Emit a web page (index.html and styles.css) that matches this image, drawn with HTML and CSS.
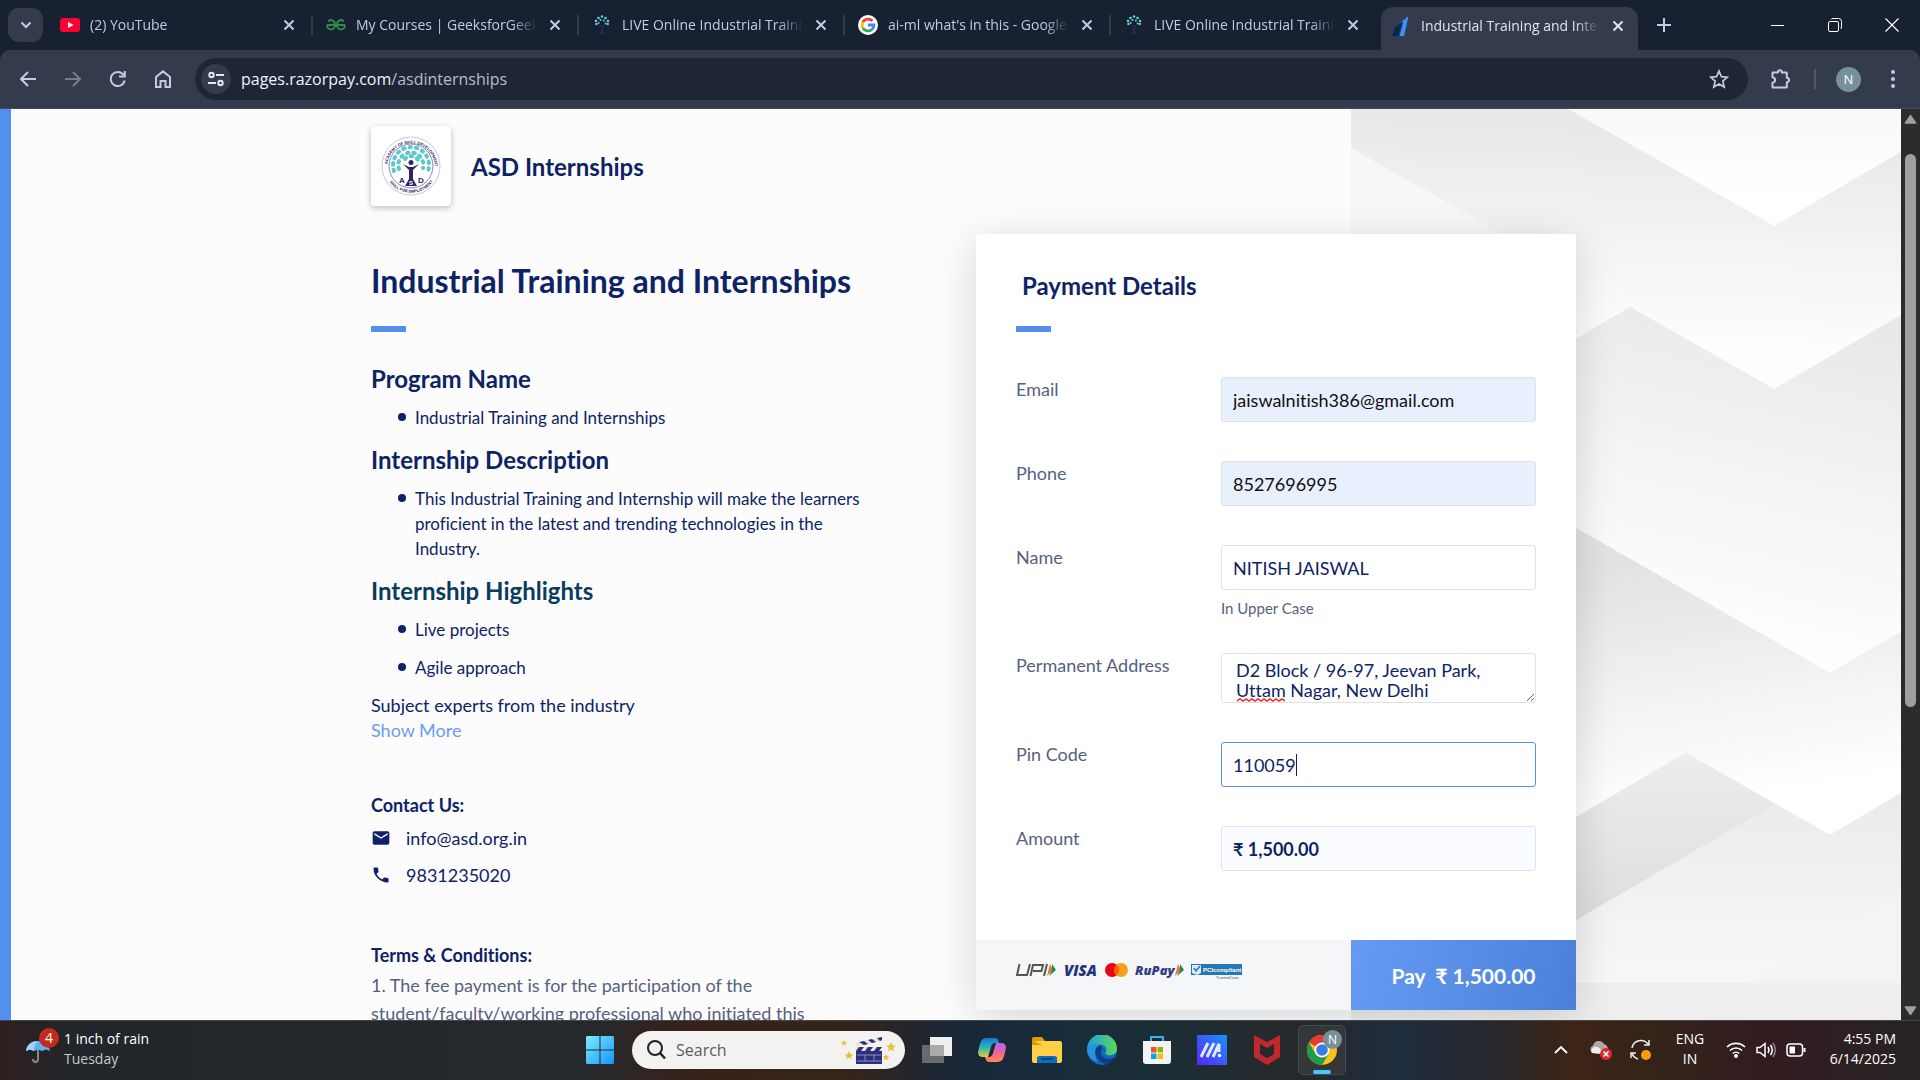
FILE: index.html
```html
<!DOCTYPE html>
<html lang="en">
<head>
<meta charset="utf-8">
<title>Industrial Training and Internships</title>
<link rel="stylesheet" href="styles.css">
</head>
<body>
<svg class="defs" width="0" height="0" aria-hidden="true">
  <symbol id="x" viewBox="0 0 12 12"><path d="M1.5 1.5l9 9M10.5 1.5l-9 9" stroke="currentColor" stroke-width="2" fill="none"/></symbol>
  <symbol id="tree" viewBox="0 0 20 20">
    <g fill="#5fd0d4"><circle cx="10" cy="1.5" r="1.3"/><circle cx="6.5" cy="3" r="1.3"/><circle cx="13.5" cy="3" r="1.3"/><circle cx="4" cy="6" r="1.3"/><circle cx="16" cy="6" r="1.3"/><circle cx="4.400" cy="9" r="1.2"/><circle cx="15.800" cy="9" r="1.2"/><circle cx="8.5" cy="5" r="1"/><circle cx="11.8" cy="5.6" r="1"/><circle cx="6.6" cy="8" r="1"/><circle cx="13.6" cy="8.4" r="1"/></g>
    <path d="M7 9.500l2.400 2.500v4l-2.400 3h6l-2-3v-4l2-2.500-3 1.500z" fill="#2b2468"/>
  </symbol>
</svg>

<header class="browser">
  <div class="tabstrip">
    <button class="tab-search" aria-label="Search tabs"><svg width="12" height="8" viewBox="0 0 12 8"><path d="M1.500 1.500L6 6l4.500-4.500" fill="none" stroke="currentColor" stroke-width="2"/></svg></button>
    <div class="tab">
      <svg class="fav" viewBox="0 0 20 20"><rect y="3" width="20" height="14" rx="3" fill="#ff0033"/><path d="M8 7l5.500 3L8 13z" fill="#fff"/></svg>
      <span class="tab-title">(2) YouTube</span><button class="tab-close" aria-label="Close tab"><svg><use href="#x"/></svg></button>
    </div>
    <div class="tab">
      <svg class="fav" viewBox="0 0 20 20"><path d="M1 10h18M1 10c0 6 8 6 8 0 0-5-5-6-7-3.500M19 10c0 6-8 6-8 0 0-5 5-6 7-3.500" fill="none" stroke="#2f8d46" stroke-width="2"/></svg>
      <span class="tab-title">My Courses | GeeksforGeeks</span><button class="tab-close" aria-label="Close tab"><svg><use href="#x"/></svg></button>
    </div>
    <div class="tab">
      <svg class="fav"><use href="#tree"/></svg>
      <span class="tab-title">LIVE Online Industrial Training</span><button class="tab-close" aria-label="Close tab"><svg><use href="#x"/></svg></button>
    </div>
    <div class="tab">
      <svg class="fav" viewBox="0 0 20 20"><circle cx="10" cy="10" r="10" fill="#fff"/><g fill="none" stroke-width="2.800"><path d="M14.500 6A6 6 0 0 0 4.800 7.200" stroke="#ea4335"/><path d="M4.800 7.200a6 6 0 0 0 0 5.600" stroke="#fbbc04"/><path d="M4.800 12.800a6 6 0 0 0 9 1.800" stroke="#34a853"/><path d="M13.800 14.600A6 6 0 0 0 16 10h-6" stroke="#4285f4"/></g></svg>
      <span class="tab-title">ai-ml what's in this - Google Search</span><button class="tab-close" aria-label="Close tab"><svg><use href="#x"/></svg></button>
    </div>
    <div class="tab last">
      <svg class="fav"><use href="#tree"/></svg>
      <span class="tab-title">LIVE Online Industrial Training</span><button class="tab-close" aria-label="Close tab"><svg><use href="#x"/></svg></button>
    </div>
    <div class="tab active">
      <svg class="fav" viewBox="0 0 20 20"><path d="M5 10.500L17.500 0 13 20H8.500l4-14.500-8 5.500z" fill="#3395ff"/><path d="M4 11l7-5-3.500 14H1z" fill="#072654"/></svg>
      <span class="tab-title">Industrial Training and Internships</span><button class="tab-close" aria-label="Close tab"><svg><use href="#x"/></svg></button>
    </div>
    <button class="new-tab" aria-label="New tab"><svg width="14" height="14" viewBox="0 0 14 14"><path d="M7 0v14M0 7h14" stroke="currentColor" stroke-width="2"/></svg></button>
    <div class="win-controls">
      <button aria-label="Minimize"><svg width="13" height="13" viewBox="0 0 13 13"><path d="M0 6.500h13" stroke="#fff"/></svg></button>
      <button aria-label="Restore"><svg width="14" height="14" viewBox="0 0 14 14" fill="none" stroke="#fff"><rect x=".5" y="3.500" width="10" height="10" rx="1.500"/><path d="M3 1.500q.5-1 2-1h5.500q3 0 3 3V9q0 1.500-1 2"/></svg></button>
      <button aria-label="Close"><svg width="14" height="14" viewBox="0 0 14 14"><path d="M.5.500l13 13M13.500.500l-13 13" stroke="#fff" stroke-width="1.200"/></svg></button>
    </div>
  </div>
  <nav class="toolbar">
    <button aria-label="Back"><svg width="16" height="16" viewBox="0 0 16 16"><path d="M16 8H1.500M8 1L1 8l7 7" fill="none" stroke="currentColor" stroke-width="2"/></svg></button>
    <button class="dim" aria-label="Forward"><svg width="16" height="16" viewBox="0 0 16 16"><path d="M0 8h14.500M8 1l7 7-7 7" fill="none" stroke="currentColor" stroke-width="2"/></svg></button>
    <button aria-label="Reload"><svg width="16" height="16" viewBox="0 0 16 16"><path d="M14.600 9.500A7 7 0 1 1 13.500 4M14.800 0v5.500H9" fill="none" stroke="currentColor" stroke-width="2"/></svg></button>
    <button aria-label="Home"><svg width="16" height="18" viewBox="0 0 16 18"><path d="M1 17V7l7-5.600L15 7v10h-4.500v-6h-5v6z" fill="none" stroke="currentColor" stroke-width="2"/></svg></button>
    <div class="omnibox">
      <button class="site-info" aria-label="Site information"><svg width="16" height="16" viewBox="0 0 16 16" fill="none" stroke="currentColor" stroke-width="2"><circle cx="3.500" cy="4" r="2.200"/><path d="M8 4h8M0 12h8"/><circle cx="12.500" cy="12" r="2.200"/></svg></button>
      <div class="url"><span>pages.razorpay.com</span>/asdinternships</div>
      <button class="star" aria-label="Bookmark"><svg width="20" height="20" viewBox="0 0 20 20"><path d="M10 2l2.400 5.600 6 .500-4.600 4 1.400 5.900L10 14.900 4.800 18l1.400-5.900-4.600-4 6-.5z" fill="none" stroke="currentColor" stroke-width="1.700"/></svg></button>
    </div>
    <button class="ext" aria-label="Extensions"><svg width="22" height="22" viewBox="0 0 22 22"><path d="M2.500 4.500h5.300c0-3 4-3 4 0h5v5.200c3 .3 3 4.300 0 4.600v5.200H2.500v-4.800c3.400-.4 3.400-5 0-5.400z" fill="none" stroke="currentColor" stroke-width="2" stroke-linejoin="round"/></svg></button>
    <span class="tool-sep"></span>
    <button class="profile" aria-label="Profile">N</button>
    <button class="menu" aria-label="Menu"><svg width="4" height="18" viewBox="0 0 4 18" fill="currentColor"><circle cx="2" cy="2" r="2"/><circle cx="2" cy="9" r="2"/><circle cx="2" cy="16" r="2"/></svg></button>
  </nav>
</header>

<div class="viewport">
<main class="page">
  <svg class="pattern" viewBox="0 0 550 911" preserveAspectRatio="none" aria-hidden="true">
    <defs>
      <linearGradient id="g0" x1="0" y1="0" x2="0" y2="1"><stop offset="0" stop-color="#f9f9f9"/><stop offset=".8" stop-color="#fff"/></linearGradient>
      <linearGradient id="g1" gradientUnits="userSpaceOnUse" x1="240" y1="10" x2="230" y2="230"><stop offset="0" stop-color="#e8e8e8"/><stop offset="1" stop-color="#fdfdfd"/></linearGradient>
      <linearGradient id="g4" gradientUnits="userSpaceOnUse" x1="0" y1="640" x2="0" y2="874"><stop offset="0" stop-color="#ededed"/><stop offset="1" stop-color="#d8d8d8"/></linearGradient>
      <linearGradient id="g5" gradientUnits="userSpaceOnUse" x1="0" y1="690" x2="0" y2="874"><stop offset="0" stop-color="#ebebeb"/><stop offset="1" stop-color="#f7f7f7"/></linearGradient>
      <linearGradient id="g8" gradientUnits="userSpaceOnUse" x1="450" y1="210" x2="380" y2="530"><stop offset="0" stop-color="#e9e9e9"/><stop offset="1" stop-color="#fefefe"/></linearGradient>
      <linearGradient id="g9" gradientUnits="userSpaceOnUse" x1="350" y1="440" x2="390" y2="690"><stop offset="0" stop-color="#e2e2e2"/><stop offset="1" stop-color="#fff"/></linearGradient>
    </defs>
    <path d="M0 0h550v911H0z" fill="#eee"/>
    <path d="M217 0l206 117L550 43V0z" fill="url(#g0)"/>
    <path d="M0 0h217l206 117L550 43v163l-127 74-144-82-54 32H0z" fill="url(#g1)"/>
    <path d="M0 39l152 86v100H0z" fill="#f7f7f7"/>
    <path d="M225 230l54-32 144 82 127-74v317l-71 41-254-145z" fill="url(#g8)"/>
    <path d="M225 419l254 145 71-41v161l-71 42-144-82-110 64z" fill="url(#g9)"/>
    <path d="M225 874V708l110-64 144 82 71-42v190z" fill="url(#g5)"/>
    <path d="M225 811V708l110-64 89 51z" fill="url(#g4)"/>
    <path d="M396 874l154-90v90z" fill="#f4f4f4"/>
  </svg>
  <div class="content">
    <div class="brand">
      <div class="brand-logo">
        <svg width="60" height="60" viewBox="0 0 60 60" role="img" aria-label="Academy of Skill Development">
          <defs><path id="arcT" d="M8 41A24 24 0 1 1 52 41"/><path id="arcB" d="M5 40A27 27 0 0 0 55 40"/></defs>
          <circle cx="30" cy="30" r="29" fill="#fff" stroke="#c9c6d8"/><circle cx="30" cy="30" r="22" fill="none" stroke="#8d87ab"/>
          <g font-family="Liberation Sans, sans-serif" font-weight="700" fill="#2b2468" font-size="4"><text><textPath href="#arcT" startOffset="13">ACADEMY OF SKILL DEVELOPMENT</textPath></text><text><textPath href="#arcB" startOffset="7">SKILL FOR EMPLOYMENT</textPath></text></g>
          <g fill="none" stroke="#5cc9cd" stroke-width="4" stroke-linecap="round" stroke-dasharray="1.500 5"><path d="M13 35A18 18 0 1 1 47 35"/><path d="M18 33A12.500 12.500 0 1 1 42 32"/><path d="M24 23a8 8 0 0 1 13 1"/></g>
          <path d="M22 28l6 6v9l-4 7h12l-4-7v-9l6-6-6 3h-4z" fill="#2b2468"/><circle cx="30" cy="26.500" r="2.500" fill="#2b2468"/>
          <g font-family="Liberation Sans, sans-serif" font-weight="700" font-size="8" fill="#2b2468"><text x="18" y="47">A</text><text x="37" y="47">D</text><text x="28" y="49" font-size="6" fill="#fff">S</text></g>
        </svg>
      </div>
      <span class="brand-name">ASD Internships</span>
    </div>
    <div class="columns">
      <section class="details">
        <h1>Industrial Training and Internships</h1>
        <div class="rule"></div>
        <div class="description">
          <h2>Program Name</h2>
          <ul><li>Industrial Training and Internships</li></ul>
          <h2>Internship Description</h2>
          <ul><li>This Industrial Training and Internship will make the learners<br>proficient in the latest and trending technologies in the<br>Industry.</li></ul>
          <h2 class="teal">Internship Highlights</h2>
          <ul><li>Live projects</li><li>Agile approach</li></ul>
          <p>Subject experts from the industry</p>
          <a href="#more">Show More</a>
        </div>
        <div class="contact">
          <h3>Contact Us:</h3>
          <div class="contact-row"><svg width="20" height="20" viewBox="0 0 24 24"><path d="M20 4H4a2 2 0 0 0-2 2v12a2 2 0 0 0 2 2h16a2 2 0 0 0 2-2V6a2 2 0 0 0-2-2zm0 4l-8 5-8-5V6l8 5 8-5z" fill="#0d2366"/></svg>info@asd.org.in</div>
          <div class="contact-row"><svg width="20" height="20" viewBox="0 0 24 24"><path d="M6.620 10.790a15.150 15.150 0 0 0 6.590 6.590l2.200-2.200a1 1 0 0 1 1.010-.240 11.400 11.400 0 0 0 3.580.570 1 1 0 0 1 1 1V20a1 1 0 0 1-1 1A17 17 0 0 1 3 4a1 1 0 0 1 1-1h3.500a1 1 0 0 1 1 1c0 1.250.2 2.450.57 3.570a1 1 0 0 1-.250 1.020z" fill="#0d2366"/></svg>9831235020</div>
        </div>
        <div class="terms">
          <h3>Terms &amp; Conditions:</h3>
          <p>1. The fee payment is for the participation of the<br>student/faculty/working professional who initiated this</p>
        </div>
      </section>
      <form class="card">
        <div class="card-body">
          <h2>Payment Details</h2>
          <div class="rule"></div>
          <div class="fields">
            <label for="email">Email</label><input class="filled" id="email" type="email" value="jaiswalnitish386@gmail.com">
            <label for="phone">Phone</label><input class="filled" id="phone" type="tel" value="8527696995">
            <label for="name">Name</label><div><input id="name" type="text" value="NITISH JAISWAL"><small>In Upper Case</small></div>
            <label for="address">Permanent Address</label>
            <div class="field-wrap"><textarea id="address" spellcheck="false">D2 Block / 96-97, Jeevan Park,
Uttam Nagar, New Delhi</textarea><svg class="squiggle" width="50" height="4" viewBox="0 0 50 4"><path d="M0 3l3-2 3 2 3-2 3 2 3-2 3 2 3-2 3 2 3-2 3 2 3-2 3 2 3-2 3 2 3-2 3 2" fill="none" stroke="#f22" stroke-width="1.500"/></svg></div>
            <label for="pin">Pin Code</label><div class="field-wrap"><input class="focused" id="pin" type="text" value="110059"><span class="caret"></span></div>
            <label for="amount">Amount</label><input class="amount" id="amount" type="text" value="₹ 1,500.00" readonly>
          </div>
        </div>
        <div class="card-foot">
          <svg class="methods" width="226" height="20" viewBox="0 0 226 20" role="img" aria-label="UPI, Visa, Mastercard, RuPay, PCI compliant">
            <g fill="none" stroke="#555" stroke-width="2"><path d="M3.500 4L1 15h10l3-11M14.500 16L17 5h10l-1.500 6H17M31 4l-3 12"/></g>
            <path d="M34 4l3 6-6 6z" fill="#e8772e"/><path d="M36 4l4 6-7 6 3-6z" fill="#1f8a4c"/>
            <g font-family="Open Sans, sans-serif" font-weight="800" font-style="italic"><text x="48" y="16" font-size="15" fill="#26337a">VISA</text><text x="119" y="15" font-size="13" fill="#353b87">RuPay</text></g>
            <circle cx="96" cy="10" r="7" fill="#eb001b"/><circle cx="105" cy="10" r="7" fill="#f79e1b"/><path d="M100.500 4.600a7 7 0 0 1 0 10.800 7 7 0 0 1 0-10.800z" fill="#ff5f00"/>
            <path d="M162 4l3 6-6 6z" fill="#e8772e"/><path d="M164 4l4 6-7 6 3-6z" fill="#1f8a4c"/>
            <path d="M175 4h51v11h-51z" fill="#2477b3"/><path d="M176 5h9v8l-4 2-5-2z" fill="#d9ecf7"/><path d="M178 8l2 3 4-5" fill="none" stroke="#2477b3" stroke-width="1.500"/>
            <g font-family="Liberation Sans, sans-serif"><text x="187" y="12" font-size="6" font-weight="700" fill="#fff">PCIcompliant</text><text x="200" y="19" font-size="4" fill="#456">TrustedCase</text></g>
          </svg>
          <button class="pay" type="button">Pay&nbsp; ₹ 1,500.00</button>
        </div>
      </form>
    </div>
  </div>
</main>
<div class="scrollbar" aria-hidden="true">
  <svg width="13" height="11" viewBox="0 0 11 9"><path d="M5.500 1L10 7.500H1z" fill="#a0a0a0" stroke="#a0a0a0" stroke-linejoin="round"/></svg>
  <div class="track"><div class="thumb"></div></div>
  <svg width="13" height="11" viewBox="0 0 11 9"><path d="M5.500 8L10 1.500H1z" fill="#a0a0a0" stroke="#a0a0a0" stroke-linejoin="round"/></svg>
</div>
</div>

<footer class="taskbar">
  <div class="widgets">
    <div class="weather"><svg width="26" height="28" viewBox="0 0 26 28"><path d="M13 13v10c0 4-5 4-5 0" fill="none" stroke="#888" stroke-width="2"/><path d="M1 15C2 8 7 5 13 5s11 3 12 10l-4-1.500-4 1.500-4-1.500L9 15l-4-1.500z" fill="#5fb0f2"/><path d="M1 15C2 8 7 5 13 5q-4 3-4 10l-4-1.500z" fill="#9dd2fb"/></svg><span class="badge">4</span></div>
    <div class="weather-text"><span>1 inch of rain</span><span class="muted">Tuesday</span></div>
  </div>
  <div class="dock">
    <button class="start" aria-label="Start"><svg width="28" height="28" viewBox="0 0 28 28"><defs><linearGradient id="win" x1="0" y1="0" x2="1" y2="1"><stop offset="0" stop-color="#7ceeff"/><stop offset="1" stop-color="#1594fa"/></linearGradient></defs><path d="M1 0h12.500v13.500H0V1zM14.500 0H27l1 1v12.500H14.500zM0 14.500h13.500V28H1l-1-1zM14.500 14.500H28V27l-1 1H14.500z" fill="url(#win)"/></svg></button>
    <label class="search">
      <svg width="22" height="22" viewBox="0 0 22 22"><circle cx="10" cy="9" r="7" fill="none" stroke="#222" stroke-width="2"/><path d="M15 14l5 5.500" stroke="#222" stroke-width="2.500"/></svg>
      <input type="text" placeholder="Search" aria-label="Search">
      <svg width="56" height="28" viewBox="0 0 56 28"><g fill="#eebc3d"><path d="M8 15l1.300 3 3 .2-2.300 2 .8 3L8 21.500 5.200 23.200l.8-3-2.300-2 3-.2z"/><path d="M3 4l1 2 2 .2-1.600 1.300.5 2L3 8.500 1 9.500l.6-2L0 6.200 2 6zM50 6l1.500 3.200 3.500.3-2.700 2.300.8 3.400L50 13.400l-3 1.800.8-3.400L45 9.500l3.500-.3zM45 18l1 2.200 2.300.2-1.700 1.600.5 2.300-2.100-1.200-2.100 1.200.5-2.300-1.700-1.600 2.300-.2z"/></g><path d="M15 12h26v16H15z" fill="#2c2f7c"/><path d="M14 7L40 1v4L15 11zM15 11h26v4H15z" fill="#efe3da"/><path d="M18 6l5 3 4-1-4-3zM27 4l4 3 4-1-4-3zM36 2l3 3 2-1V1zM18 11l-3 4h5l3-4zM27 11l-3 4h5l3-4zM36 11l-3 4h5l3-4z" fill="#2c2f7c"/><path d="M16 19h24M16 25h24M24 19v6M33 19v6" stroke="#8b90cf"/></svg>
    </label>
    <div class="apps">
      <button aria-label="Task view"><svg width="30" height="30" viewBox="0 0 30 30"><path d="M8 2h22v19H8z" fill="#eee"/><path d="M0 10h22v18H0z" fill="#777" fill-opacity=".85"/><path d="M8 10h14v11H8z" fill="#aaa"/></svg></button>
      <button aria-label="Copilot"><svg width="30" height="28" viewBox="0 0 30 28"><defs><linearGradient id="cpa" x1="0" y1="0" x2="0" y2="1"><stop offset="0" stop-color="#1577d8"/><stop offset=".5" stop-color="#2bb6b0"/><stop offset="1" stop-color="#f2c83a"/></linearGradient><linearGradient id="cpb" x1="0" y1="0" x2="0" y2="1"><stop offset="0" stop-color="#b06af0"/><stop offset=".5" stop-color="#f0609a"/><stop offset="1" stop-color="#ff8d4a"/></linearGradient></defs><path d="M9 2h9q3 0 4 5h-4q-3 0-4 4l-3 10H6q-5 0-5-5 1-6 3-11 2-3 5-3z" fill="url(#cpa)"/><path d="M21 26h-9q-3 0-4-5h4q3 0 4-4l3-10h5q5 0 5 5-1 6-3 11-2 3-5 3z" fill="url(#cpb)"/></svg></button>
      <button aria-label="File Explorer"><svg width="30" height="28" viewBox="0 0 30 28"><path d="M0 3q0-2 2-2h8l3 4v6H0z" fill="#dd9a0a"/><path d="M2 5h26q2 0 2 2v18q0 2-2 2H2q-2 0-2-2V9h10z" fill="#ffcf48"/><path d="M5 27v-5q0-2 3-2h14q3 0 3 2v5z" fill="#0e6cc0"/><path d="M9 23h12" stroke="#0a4580" stroke-width="2"/></svg></button>
      <button aria-label="Edge"><svg width="30" height="30" viewBox="0 0 30 30"><defs><linearGradient id="edg" x1="0" y1="0" x2="1" y2="0"><stop offset="0" stop-color="#1f9be0"/><stop offset="1" stop-color="#5bd957"/></linearGradient></defs><circle cx="15" cy="15" r="15" fill="#1267bd"/><path d="M0 14A15 15 0 0 1 30 14c0 7-11 8-12 4 2-2 2-8-4-8C6 9 1 13 0 14z" fill="url(#edg)"/><path d="M27 22c-2 2-5 3-8 2 2 1 5 1 8-1l3 0v6l-9 1z" fill="#1a2e37"/><path d="M14 10c-9 1-7 17 5 19 4-1 7-4 8-6-8 3-17-2-12-9z" fill="#0d3f86"/><path d="M0 14c3-5 8-6 14-4C7 10 6 20 11 27 4 25 0 20 0 14z" fill="#2794de"/></svg></button>
      <button aria-label="Microsoft Store"><svg width="30" height="30" viewBox="0 0 30 30"><path d="M9 7V2h12v5" fill="none" stroke="#35b2f2" stroke-width="2"/><path d="M1 6h28v20q0 3-3 3H4q-3 0-3-3z" fill="#f3f3f3"/><path d="M9 12h5.500v5.500H9z" fill="#f35325"/><path d="M15.500 12H21v5.500h-5.500z" fill="#81bc06"/><path d="M9 18.500h5.500V24H9z" fill="#05a6f0"/><path d="M15.500 18.500H21V24h-5.500z" fill="#ffba08"/></svg></button>
      <button aria-label="MyASUS"><svg width="30" height="30" viewBox="0 0 30 30"><defs><linearGradient id="asus" x1="0" y1="1" x2="1" y2="0"><stop offset="0" stop-color="#5b24f5"/><stop offset="1" stop-color="#1593ff"/></linearGradient></defs><path d="M0 0h30v30H0z" fill="url(#asus)"/><path d="M4 22l7-14M10 22l7-14M16 22l6-13v8" fill="none" stroke="#dfe8ff" stroke-width="3"/><circle cx="22.500" cy="20.500" r="1.800" fill="#fff"/></svg></button>
      <button aria-label="McAfee"><svg width="26" height="30" viewBox="0 0 26 30"><path d="M0 0l13 7 13-7v22l-13 8-13-8zM6 9v10l7 4 7-4V9l-7 4z" fill="#c1272d" fill-rule="evenodd"/></svg></button>
      <button class="running" aria-label="Chrome"><svg width="30" height="30" viewBox="0 0 30 30"><circle cx="15" cy="15" r="15" fill="#fbc116"/><path d="M15 15L2 7.500A15 15 0 0 1 28 7.500H15z" fill="#e33b2e"/><path d="M2 7.500a15 15 0 0 0 13 22.500l6.500-11L15 15 8.500 18.700z" fill="#229a4a"/><circle cx="15" cy="15" r="7.500" fill="#fff"/><circle cx="15" cy="15" r="5.800" fill="#3a7de8"/></svg><span class="avatar">N</span></button>
    </div>
  </div>
  <div class="tray">
    <svg width="14" height="9" viewBox="0 0 14 9"><path d="M1 8l6-6 6 6" fill="none" stroke="#fff" stroke-width="1.800"/></svg>
    <svg class="cloud" width="22" height="20" viewBox="0 0 22 20"><path d="M3 13a4 4 0 0 1 0-7.500A6 6 0 0 1 14 4q4 1 4 6l-6 4z" fill="#aaa"/><path d="M2 13q-2-4 2-6 3-1 5 1l4 4v2z" fill="#eee"/><circle cx="16" cy="14" r="6" fill="#d92c30"/><path d="M13.500 11.500l5 5M18.500 11.500l-5 5" stroke="#fff" stroke-width="1.500"/></svg>
    <svg class="sync" width="22" height="22" viewBox="0 0 22 22"><path d="M2 9a9 9 0 0 1 16-4M19 1v5h-5M8 20a9 9 0 0 1-6-6M1 19v-5h5" fill="none" stroke="#eee" stroke-width="1.500"/><circle cx="16" cy="16" r="5" fill="#ff9a0c"/></svg>
    <div class="lang"><span>ENG</span><span>IN</span></div>
    <div class="status">
      <svg width="20" height="18" viewBox="0 0 20 18" fill="none" stroke="#fff" stroke-width="1.600"><path d="M1 6a13 13 0 0 1 18 0M4 9.500a8.500 8.500 0 0 1 12 0M6.800 12.500a4.600 4.600 0 0 1 6.400 0"/><circle cx="10" cy="15" r="1.200" fill="#fff"/></svg>
      <svg width="20" height="18" viewBox="0 0 20 18" fill="none" stroke="#fff" stroke-width="1.500"><path d="M1 6.500v5h3l5 4v-13l-5 4zM12 6q2 3 0 6M14.500 4q3.500 5 0 10"/><path d="M17 2q4.500 7 0 14" stroke="#888"/></svg>
      <svg width="20" height="14" viewBox="0 0 20 14"><rect x="1" y="1" width="15.500" height="12" rx="3" fill="none" stroke="#fff" stroke-width="1.500"/><path d="M3.500 3.500H9v7H3.500z" fill="#fff"/><path d="M18.500 5v4" stroke="#fff" stroke-width="2"/></svg>
    </div>
    <div class="clock"><span>4:55 PM</span><span>6/14/2025</span></div>
  </div>
</footer>
</body>
</html>
```
FILE: styles.css
```css
* { box-sizing: border-box; }

body {
  margin: 0;
  height: 100vh;
  display: flex;
  flex-direction: column;
  overflow: hidden;
  font-family: Lato, sans-serif;
  font-variant-ligatures: none;
  color: #0d2366;
}

.defs { display: block; }

button {
  border: 0;
  padding: 0;
  background: none;
  color: inherit;
  font: inherit;
  display: flex;
  align-items: center;
  justify-content: center;
  flex: none;
}

h1, h2, h3, p, ul { margin: 0; padding: 0; }

/* Browser frame */
.browser {
  flex: none;
  background: #182131;
  color: #c3cbe0;
  font-family: "Open Sans", sans-serif;
}

.tabstrip { display: flex; height: 50px; align-items: center; }

.tab-search {
  width: 35px;
  height: 34px;
  margin: 0 4px 0 8px;
  border-radius: 11px;
  background: #333b4d;
}

.tab {
  flex: 0 1 266px;
  min-width: 0;
  height: 20px;
  display: flex;
  align-items: center;
  padding: 0 16px 0 13px;
  border-right: 2px solid #333b4d;
}

.tab.last { border-color: transparent; }

.tab.active {
  flex-basis: 257px;
  height: 43px;
  align-self: flex-end;
  margin-left: 4px;
  padding: 0 14px 6px 10px;
  border: 0;
  border-radius: 12px 12px 0 0;
  background: #333b4d;
  color: #dfe4f2;
}

.fav { width: 20px; height: 20px; flex: none; }

.tab-title {
  flex: 1;
  margin: 0 12px 0 10px;
  font-size: 14px;
  line-height: 20px;
  white-space: nowrap;
  overflow: hidden;
  mask-image: linear-gradient(to right, #000 86%, transparent);
}

.tab-close svg { width: 12px; height: 12px; }

.new-tab { width: 52px; }

.win-controls { margin-left: auto; display: flex; }
.win-controls button { width: 57px; height: 40px; }

.toolbar {
  height: 59px;
  display: flex;
  align-items: center;
  padding: 0 5px;
  background: #333b4d;
  border-bottom: 1px solid #4c4952;
  border-radius: 10px 10px 0 0;
}

.toolbar > button { width: 45px; height: 34px; }
.toolbar > .dim { color: #747c8d; }

.omnibox {
  flex: 1;
  height: 42px;
  display: flex;
  align-items: center;
  margin-left: 10px;
  padding: 0 19px 0 6px;
  border-radius: 21px;
  background: #1e2636;
}

.site-info { width: 30px; height: 30px; border-radius: 50%; background: #333b4d; color: #e4e7f0; }
.url { flex: 1; margin-left: 10px; font-size: 16px; color: #b9bcc6; }
.url span { color: #f0f2f8; }

.toolbar > .ext { width: 66px; }
.tool-sep { width: 2px; height: 20px; background: #4f5768; }
.toolbar > .profile { width: 25px; height: 25px; margin: 0 10px 0 20px; border-radius: 50%; background: #78909c; color: #fff; font-size: 13px; }
.toolbar > .menu { width: 44px; }

/* Page */
.viewport { flex: 1; min-height: 0; display: flex; }

.page {
  flex: 1;
  min-width: 0;
  display: grid;
  grid-template-columns: 1340fr 550fr;
  grid-template-rows: 100%;
  overflow: hidden;
  border-left: 11px solid #528ff0;
  background: #fcfcfc;
}

.pattern { grid-area: 1 / 2; width: 100%; height: 100%; }

.content {
  grid-area: 1 / 1 / 2 / 3;
  width: 1240px;
  max-width: 100%;
  margin: 0 auto;
  padding: 17px 0 0 35px;
}

.brand { display: flex; align-items: center; gap: 20px; margin-bottom: 28px; }
.brand-logo {
  width: 80px;
  height: 80px;
  display: flex;
  align-items: center;
  justify-content: center;
  border-radius: 4px;
  background: #fff;
  box-shadow: 0 2px 6px rgba(0, 0, 0, .25);
}
.brand-name { font-size: 24px; font-weight: 700; }

.columns { display: flex; justify-content: space-between; align-items: flex-start; }

.details { width: 520px; padding-top: 27px; }
.details h1 { font-size: 32px; line-height: 40px; font-weight: 700; }

.rule { width: 35px; height: 6px; margin-top: 25px; background: #528ff0; }

.description { margin-top: 32px; font-size: 17px; line-height: 25px; }
.description h2 { font-size: 24px; line-height: 30px; font-weight: 700; }
.description ul { margin: 11px 0 15px; padding-left: 44px; list-style: none; }
.description ul:last-of-type { margin-bottom: 13px; }
.description li { position: relative; }
.description li::before {
  content: "";
  position: absolute;
  left: -17px;
  top: 8px;
  width: 8px;
  height: 8px;
  border-radius: 50%;
  background: #0d2366;
}
.description li + li { margin-top: 13px; }
.description .teal { color: #093c5d; }
.description p { font-size: 18px; }
.description a { display: block; font-size: 18px; color: #6c9bf2; text-decoration: none; }

.details h3 { font-size: 18px; line-height: 25px; font-weight: 700; }
.contact { margin-top: 50px; font-size: 18px; }
.contact-row { display: flex; align-items: center; gap: 15px; height: 25px; margin-top: 7px; }
.contact-row + .contact-row { margin-top: 12px; }

.terms { margin-top: 56px; }
.terms p { margin-top: 3px; font-size: 18px; line-height: 28px; color: #56617f; }

/* Payment card */
.card {
  width: 600px;
  border-radius: 3px;
  background: #fff;
  box-shadow: 0 8px 40px rgba(0, 20, 10, .16);
}
.card-body { padding: 32px 40px 69px; }
.card-body h2 { padding-left: 6px; font-size: 24px; line-height: 40px; font-weight: 700; }
.card-body .rule { margin-top: 20px; }

.fields {
  display: grid;
  grid-template-columns: 205px 1fr;
  row-gap: 39px;
  margin-top: 45px;
}
.fields label { font-size: 18px; line-height: 25px; color: #56617f; }

.fields input, .fields textarea {
  display: block;
  width: 100%;
  height: 45px;
  padding: 1px 11px 0;
  border: 1px solid #dfe1e5;
  border-radius: 3px;
  outline: 0;
  background: #fff;
  color: #0d2366;
  font: 18px Lato, sans-serif;
  font-variant-ligatures: none;
}
.fields .filled { background: #e8f0fe; color: #111; }
.fields .focused { border-color: #528ff0; }
.fields .amount { border-color: #d9e5fa; background: #fbfcff; font-weight: 700; }
.fields textarea { height: 50px; padding: 6px 14px 0; line-height: 20px; overflow: hidden; }
.fields small { display: block; height: 24px; padding-top: 8px; font-size: 15px; line-height: 20px; color: #56617f; }

.field-wrap { position: relative; }
.squiggle { position: absolute; left: 16px; top: 45px; }
.caret { position: absolute; left: 75px; top: 12px; width: 1px; height: 22px; background: #0d2366; }

.card-foot { height: 70px; display: flex; justify-content: space-between; background: #f4f6f8; }
.methods { margin: 20px 0 0 40px; }
.pay {
  width: 225px;
  background: linear-gradient(100deg, #659bf3, #4a80d8);
  color: #fff;
  font-size: 21px;
  font-weight: 700;
}

.scrollbar {
  width: 19px;
  display: flex;
  flex-direction: column;
  align-items: center;
  padding: 5px 0 4px;
  background: #2c2c2c;
}
.track { flex: 1; width: 11px; padding-top: 29px; }
.thumb { height: 65%; border-radius: 6px; background: #9f9f9f; }

/* Taskbar */
.taskbar {
  flex: none;
  height: 60px;
  display: flex;
  align-items: center;
  padding-bottom: 2px;
  border-top: 1px solid #45484a;
  background: linear-gradient(to right, #2d1f20, #21262a 4%, #26292b 31%, #37211a 36%, #352418 44%, #1c2634 49%, #17293b 52%, #1a2e37 60%, #26292b 67%, #1f2c3d 73%, #26282b 78%, #3d2415 82%, #33231a 87%, #331b20 92%, #262324);
  color: #fff;
  font-family: "Open Sans", sans-serif;
  font-size: 14px;
  line-height: 20px;
}

.widgets, .tray { flex: 1 1 0; display: flex; align-items: center; }
.widgets { padding-left: 25px; }
.weather { position: relative; display: flex; }
.badge {
  position: absolute;
  left: 14px;
  top: -8px;
  width: 20px;
  height: 20px;
  border-radius: 50%;
  background: #c42b1c;
  text-align: center;
}
.weather-text { margin-left: 13px; }
.weather-text, .lang, .clock { padding-bottom: 2px; }
.weather-text span, .lang span, .clock span { display: block; }
.muted { color: #c5c7c8; }

.dock { display: flex; align-items: center; padding-left: 14px; }
.search {
  width: 273px;
  height: 38px;
  display: flex;
  align-items: center;
  margin: 0 4px 0 18px;
  padding: 0 8px 0 13px;
  border-radius: 19px;
  background: #f3f2f1;
}
.search input {
  flex: 1;
  min-width: 0;
  margin-left: 9px;
  padding: 0;
  border: 0;
  outline: 0;
  background: none;
  font: 16px "Open Sans", sans-serif;
}
.search input::placeholder { color: #5c5c5c; }

.apps { display: flex; }
.apps button { width: 55px; height: 50px; }
.apps .running {
  position: relative;
  width: 48px;
  margin: 0 3px 0 4px;
  border: 1px solid #45494b;
  border-radius: 5px;
  background: #33373a;
}
.running::after {
  content: "";
  position: absolute;
  left: 14px;
  bottom: 0;
  width: 18px;
  height: 4px;
  border-radius: 2px;
  background: #4cc2ff;
}
.avatar {
  position: absolute;
  right: 3px;
  top: 4px;
  width: 19px;
  height: 19px;
  border-radius: 50%;
  background: #78909c;
  font-size: 12px;
  line-height: 19px;
}

.tray { justify-content: flex-end; padding-right: 24px; }
.cloud { margin-left: 22px; }
.sync { margin-left: 18px; }
.lang { width: 34px; margin-left: 21px; text-align: center; }
.status { display: flex; align-items: center; gap: 10px; margin: 0 18px 0 19px; }
.clock { width: 72px; text-align: right; white-space: nowrap; }
```
